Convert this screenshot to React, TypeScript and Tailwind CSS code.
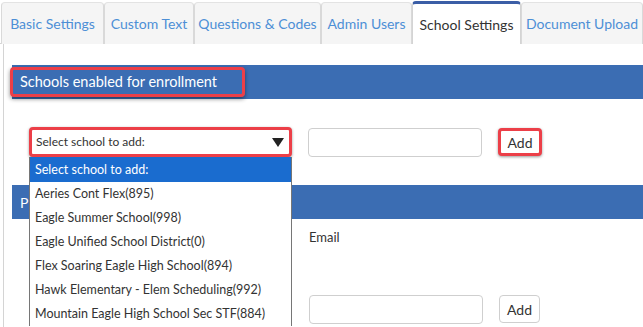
const tabs = [
  { label: 'Basic Settings', w: 'w-[103px]' },
  { label: 'Custom Text', w: 'w-[90px]' },
  { label: 'Questions & Codes', w: 'w-[127px]' },
  { label: 'Admin Users', w: 'w-[91px]' },
  { label: 'School Settings', w: 'w-[109px]', active: true },
  { label: 'Document Upload', w: 'w-[122px]' },
]

const schools = [
  'Aeries Cont Flex(895)',
  'Eagle Summer School(998)',
  'Eagle Unified School District(0)',
  'Flex Soaring Eagle High School(894)',
  'Hawk Elementary - Elem Scheduling(992)',
  'Mountain Eagle High School Sec STF(884)',
]

export default function App() {
  return (
    <div className="relative h-[327px] w-[643px] overflow-hidden bg-white font-['Lato','Liberation_Sans',sans-serif] text-[#333]">
      {/* tabs */}
      <div className="flex h-[44px] pl-[1px] pt-[1px] border-b border-[#d4d4d4]">
        {tabs.map((t) =>
          t.active ? (
            <div
              key={t.label}
              className={`${t.w} relative -mb-px flex h-[43px] items-center justify-center rounded-t-[4px] border-x border-t-[3px] border-x-[#d4d4d4] border-t-[#3b5ea6] bg-white pt-[1px] text-[14px] text-[#333]`}
            >
              {t.label}
            </div>
          ) : (
            <div
              key={t.label}
              className={`${t.w} mt-[1px] flex h-[42px] items-center justify-center rounded-t-[4px] border border-b-0 border-[#d9d9d9] border-t-[#e3e3e3] bg-[#f5f5f5] text-[14px] text-[#4d8fd6]`}
            >
              {t.label}
            </div>
          ),
        )}
      </div>

      {/* panel */}
      <div className="ml-[3px] h-[283px] border-l border-[#d4d4d4] pl-[8px] pt-[21px]">
        <div className="flex h-[34px] items-center bg-[#3b6db3]">
          <div className="-ml-[2px] flex h-[30px] w-[235px] items-center rounded-[4px] border-[3px] border-[#ec3f48] pl-[7px] text-[14.5px] text-white shadow-[0_2px_4px_rgba(0,0,0,0.45)]">
            Schools enabled for enrollment
          </div>
        </div>

        <div className="flex items-center pt-[28px]">
          <div className="ml-[17px] flex h-[30px] w-[263px] items-center justify-between rounded-[4px] border-[3px] border-[#ec3f48] bg-white pl-[4px] pr-[5px] text-[12px] text-[#333] shadow-[0_1px_3px_rgba(0,0,0,0.4)]">
            <span>Select school to add:</span>
            <svg width="12" height="9" viewBox="0 0 12 9">
              <path d="M0 0h12L6 9z" fill="#222" />
            </svg>
          </div>
          <div className="ml-[16px] h-[29px] w-[174px] rounded-[4px] border border-[#cfcfcf] bg-white" />
          <div className="ml-[16px] flex h-[28px] w-[44px] items-center justify-center rounded-[4px] border-[3px] border-[#ec3f48] bg-white text-[14px] text-[#333] shadow-[0_1px_3px_rgba(0,0,0,0.4)]">
            Add
          </div>
        </div>

        <div className="mt-[28px] flex h-[34px] items-center bg-[#3b6db3] pl-[8px] text-[14px] text-white">
          P
        </div>

        <div className="pl-[297px] pt-[9px] text-[13px] text-[#333]">Email</div>

        <div className="flex items-center pl-[297px] pt-[47px]">
          <div className="h-[29px] w-[174px] rounded-[4px] border border-[#cfcfcf] bg-white" />
          <div className="ml-[16px] flex h-[28px] w-[41px] items-center justify-center rounded-[4px] border border-[#cfcfcf] bg-white text-[14px] text-[#333]">
            Add
          </div>
        </div>
      </div>

      {/* open dropdown list */}
      <div className="absolute left-[29px] top-[157px] w-[263px] border-x border-[#767676] bg-white text-[12.5px] text-[#333]">
        <div className="flex h-[25px] items-center bg-[#1a6ccf] pl-[5px] pt-[1px] text-white">Select school to add:</div>
        {schools.map((s) => (
          <div key={s} className="flex h-[24px] items-center pl-[5px] pt-[1px]">
            {s}
          </div>
        ))}
      </div>
    </div>
  )
}
